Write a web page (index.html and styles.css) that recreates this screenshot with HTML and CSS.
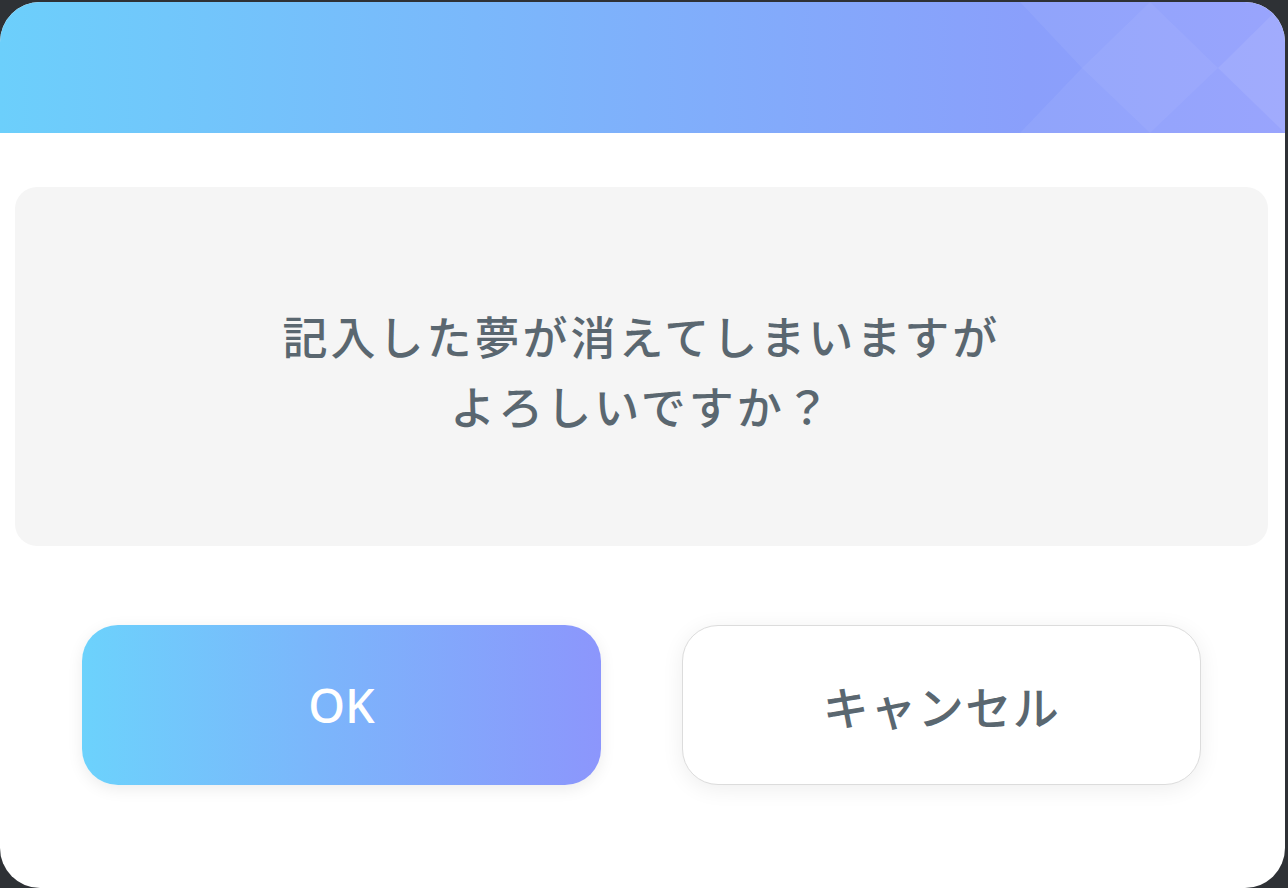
FILE: index.html
```html
<!DOCTYPE html>
<html lang="ja">
<head>
<meta charset="utf-8">
<link rel="stylesheet" href="styles.css">
</head>
<body>
<div class="dialog">
  <div class="header">
    <svg class="pattern" width="285" height="131" viewBox="0 0 285 131" preserveAspectRatio="none">
      <polygon points="20,0 285,0 285,131 20,131 82,66" fill="#ffffff" fill-opacity="0.06"/>
      <polygon points="82,66 150,0 218,66 150,131" fill="#ffffff" fill-opacity="0.05"/>
      <polygon points="218,66 285,0 285,131" fill="#ffffff" fill-opacity="0.08"/>
    </svg>
  </div>
  <div class="content">
    <div class="message">
      <p class="text">記入した夢が消えてしまいますが<br>よろしいですか？</p>
    </div>
    <div class="actions">
      <button class="btn btn-ok">OK</button>
      <button class="btn btn-cancel">キャンセル</button>
    </div>
  </div>
</div>
</body>
</html>
```
FILE: styles.css
```css
html, body {
  margin: 0;
  padding: 0;
}
body {
  background: #2e3135;
  width: 1288px;
  height: 888px;
  overflow: hidden;
  padding-top: 2px;
  box-sizing: border-box;
  font-family: "Noto Sans CJK JP", "Noto Sans", sans-serif;
}
.dialog {
  width: 1285px;
  height: 886px;
  background: #ffffff;
  border-radius: 40px;
  overflow: hidden;
  display: flex;
  flex-direction: column;
}
.header {
  height: 131px;
  flex: none;
  position: relative;
  background: linear-gradient(90deg, #6ccffb 0%, #7fb0fb 50%, #8a9ffb 80%, #939ffd 100%);
}
.pattern {
  position: absolute;
  right: 0;
  top: 0;
}
.content {
  padding: 54px 17px 0 15px;
  display: flex;
  flex-direction: column;
}
.message {
  height: 359px;
  background: #f5f5f5;
  border-radius: 22px;
  display: flex;
  align-items: center;
  justify-content: center;
}
.text {
  margin: 8px 0 0 0;
  text-align: center;
  color: #5a6770;
  font-size: 45px;
  line-height: 70px;
  letter-spacing: 3px;
  font-weight: 500;
}
.actions {
  display: flex;
  gap: 81px;
  margin-top: 79px;
  padding: 0 67px;
}
.btn {
  width: 519px;
  height: 160px;
  border-radius: 36px;
  font-family: "Noto Sans CJK JP", "Noto Sans", sans-serif;
  font-weight: 500;
  cursor: pointer;
  padding: 0;
}
.btn-ok {
  border: none;
  color: #ffffff;
  font-family: "Noto Sans", sans-serif;
  font-size: 47px;
  letter-spacing: 0;
  background: linear-gradient(90deg, #6cd2fc 0%, #7bb6fb 45%, #8c96fc 100%);
  box-shadow: 0 4px 16px rgba(0, 0, 0, 0.08);
}
.btn-cancel {
  border: 1px solid #dcdcdc;
  color: #5a6770;
  font-size: 46px;
  letter-spacing: 1.5px;
  background: #ffffff;
  box-shadow: 0 4px 22px rgba(0, 0, 0, 0.07);
}
```
